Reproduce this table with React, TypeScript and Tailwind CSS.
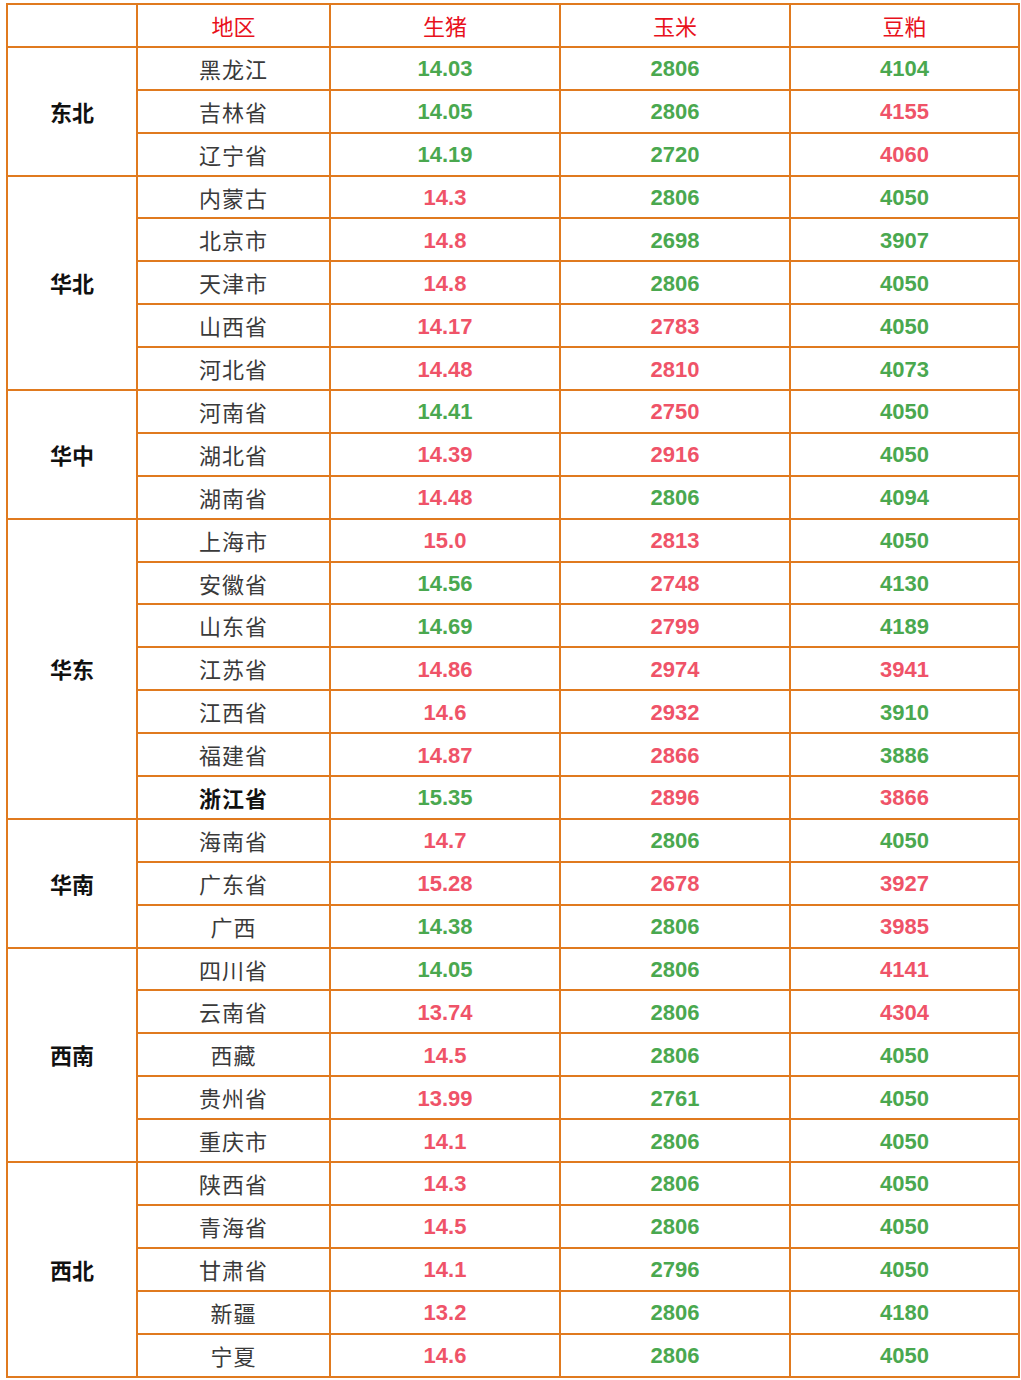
const G = "g";
const R = "r";

type Row = [string, string, string, string, string, string, string];

const groups: { name: string; rows: Row[] }[] = [
  {
    name: "东北",
    rows: [
      ["黑龙江", "14.03", G, "2806", G, "4104", G],
      ["吉林省", "14.05", G, "2806", G, "4155", R],
      ["辽宁省", "14.19", G, "2720", G, "4060", R],
    ],
  },
  {
    name: "华北",
    rows: [
      ["内蒙古", "14.3", R, "2806", G, "4050", G],
      ["北京市", "14.8", R, "2698", G, "3907", G],
      ["天津市", "14.8", R, "2806", G, "4050", G],
      ["山西省", "14.17", R, "2783", R, "4050", G],
      ["河北省", "14.48", R, "2810", R, "4073", G],
    ],
  },
  {
    name: "华中",
    rows: [
      ["河南省", "14.41", G, "2750", R, "4050", G],
      ["湖北省", "14.39", R, "2916", R, "4050", G],
      ["湖南省", "14.48", R, "2806", G, "4094", G],
    ],
  },
  {
    name: "华东",
    rows: [
      ["上海市", "15.0", R, "2813", R, "4050", G],
      ["安徽省", "14.56", G, "2748", R, "4130", G],
      ["山东省", "14.69", G, "2799", R, "4189", G],
      ["江苏省", "14.86", R, "2974", R, "3941", R],
      ["江西省", "14.6", R, "2932", R, "3910", G],
      ["福建省", "14.87", R, "2866", R, "3886", G],
      ["浙江省", "15.35", G, "2896", R, "3866", R],
    ],
  },
  {
    name: "华南",
    rows: [
      ["海南省", "14.7", R, "2806", G, "4050", G],
      ["广东省", "15.28", R, "2678", R, "3927", R],
      ["广西", "14.38", G, "2806", G, "3985", R],
    ],
  },
  {
    name: "西南",
    rows: [
      ["四川省", "14.05", G, "2806", G, "4141", R],
      ["云南省", "13.74", R, "2806", G, "4304", R],
      ["西藏", "14.5", R, "2806", G, "4050", G],
      ["贵州省", "13.99", R, "2761", G, "4050", G],
      ["重庆市", "14.1", R, "2806", G, "4050", G],
    ],
  },
  {
    name: "西北",
    rows: [
      ["陕西省", "14.3", R, "2806", G, "4050", G],
      ["青海省", "14.5", R, "2806", G, "4050", G],
      ["甘肃省", "14.1", R, "2796", G, "4050", G],
      ["新疆", "13.2", R, "2806", G, "4180", G],
      ["宁夏", "14.6", R, "2806", G, "4050", G],
    ],
  },
];

const cjk = "font-['Noto_Sans_CJK_SC',sans-serif]";
const cell = "border-2 border-[#e07a1f] h-[42.9px] p-0 text-center align-middle";

function Num({ v, c }: { v: string; c: string }) {
  return (
    <td className={cell + " pt-[4px]"}>
      <span
        className={
          "font-['Liberation_Sans',Arial,sans-serif] font-bold text-[22px] leading-none " +
          (c === G ? "text-[#4aa84f]" : "text-[#ef5368]")
        }
      >
        {v}
      </span>
    </td>
  );
}

export default function App() {
  return (
    <div className="bg-white w-[1021px] h-[1380px] pt-[3px] pl-[6px]">
      <table className="border-collapse table-fixed w-[1012px]">
        <colgroup>
          <col className="w-[130px]" />
          <col className="w-[193px]" />
          <col className="w-[230px]" />
          <col className="w-[230px]" />
          <col className="w-[229px]" />
        </colgroup>
        <thead>
          <tr>
            <th className={cell}></th>
            {["地区", "生猪", "玉米", "豆粕"].map((h) => (
              <th key={h} className={cell + " " + cjk + " font-normal text-[22px] text-[#e8111c]"}>
                {h}
              </th>
            ))}
          </tr>
        </thead>
        <tbody>
          {groups.map((g) =>
            g.rows.map((r, i) => (
              <tr key={r[0]}>
                {i === 0 && (
                  <td
                    rowSpan={g.rows.length}
                    className={cell + " " + cjk + " font-bold text-[22px] text-[#111]"}
                  >
                    {g.name}
                  </td>
                )}
                <td
                  className={
                    cell +
                    " " +
                    cjk +
                    " text-[22px] tracking-[1px] " +
                    (r[0] === "浙江省" ? "font-bold text-[#111]" : "text-[#3a3a3a]")
                  }
                >
                  {r[0]}
                </td>
                <Num v={r[1]} c={r[2]} />
                <Num v={r[3]} c={r[4]} />
                <Num v={r[5]} c={r[6]} />
              </tr>
            ))
          )}
        </tbody>
      </table>
    </div>
  );
}
